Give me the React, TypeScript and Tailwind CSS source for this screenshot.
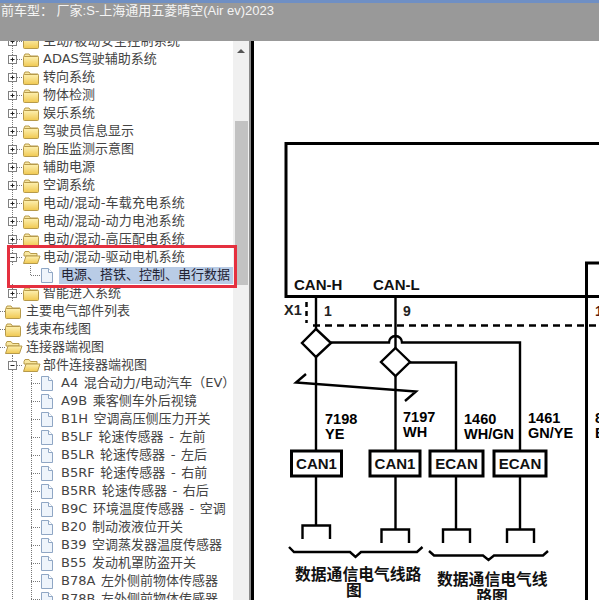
import React from "react";

type Row = { t: string; k: "c" | "o" | "f" | "fo" | "p"; inner?: boolean; sel?: boolean };

const rows: Row[] = [
  { t: "主动/被动安全控制系统", k: "c" },
  { t: "ADAS驾驶辅助系统", k: "c" },
  { t: "转向系统", k: "c" },
  { t: "物体检测", k: "c" },
  { t: "娱乐系统", k: "c" },
  { t: "驾驶员信息显示", k: "c" },
  { t: "胎压监测示意图", k: "c" },
  { t: "辅助电源", k: "c" },
  { t: "空调系统", k: "c" },
  { t: "电动/混动-车载充电系统", k: "c" },
  { t: "电动/混动-动力电池系统", k: "c" },
  { t: "电动/混动-高压配电系统", k: "c" },
  { t: "电动/混动-驱动电机系统", k: "o" },
  { t: "电源、搭铁、控制、串行数据", k: "p", sel: true },
  { t: "智能进入系统", k: "c" },
  { t: "主要电气部件列表", k: "f" },
  { t: "线束布线图", k: "f" },
  { t: "连接器端视图", k: "fo" },
  { t: "部件连接器端视图", k: "o" },
  { t: "A4 混合动力/电动汽车（EV）", k: "p", inner: true },
  { t: "A9B 乘客侧车外后视镜", k: "p", inner: true },
  { t: "B1H 空调高压侧压力开关", k: "p", inner: true },
  { t: "B5LF 轮速传感器 - 左前", k: "p", inner: true },
  { t: "B5LR 轮速传感器 - 左后", k: "p", inner: true },
  { t: "B5RF 轮速传感器 - 右前", k: "p", inner: true },
  { t: "B5RR 轮速传感器 - 右后", k: "p", inner: true },
  { t: "B9C 环境温度传感器 - 空调", k: "p", inner: true },
  { t: "B20 制动液液位开关", k: "p", inner: true },
  { t: "B39 空调蒸发器温度传感器", k: "p", inner: true },
  { t: "B55 发动机罩防盗开关", k: "p", inner: true },
  { t: "B78A 左外侧前物体传感器", k: "p", inner: true },
  { t: "B78B 左外侧前物体传感器", k: "p", inner: true },
];

const dot = { stroke: "#777", strokeWidth: 1, strokeDasharray: "1 1", fill: "none" };

function Folder({ x, open }: { x: number; open: boolean }) {
  const d = `translate(${x} 0)`;
  return open ? (
    <g transform={d}>
      <path d="M1 5.5 L2 3.5 H6 L7.5 5.5 H14 V8 H1 Z" fill="#f8e7a0" stroke="#b79a4a" />
      <path d="M.5 15.5 L3 8 H17 L14.5 15.5 Z" fill="url(#fold)" stroke="#b79a4a" />
    </g>
  ) : (
    <g transform={d}>
      <path d="M1 6 L2 4 H6 L7.5 6 H15 V8 H1 Z" fill="#f8e7a0" stroke="#b79a4a" />
      <rect x=".5" y="6.5" width="15" height="10" rx="1" fill="url(#fold)" stroke="#b79a4a" />
    </g>
  );
}

function Page({ x }: { x: number }) {
  return (
    <g transform={`translate(${x} 0)`}>
      <path d="M.5 2.5 H7.5 L11.5 6.5 V16.5 H.5 Z" fill="#eef4fb" stroke="#8fa6c4" />
      <path d="M7.5 2.5 V6.5 H11.5" fill="#ffffff" stroke="#8fa6c4" />
    </g>
  );
}

function Expander({ open }: { open: boolean }) {
  return (
    <g>
      <rect x="8.5" y="5.5" width="8" height="8" fill="#fff" stroke="#808080" />
      <path d="M10.5 9.5 H14.5" stroke="#222" />
      {!open && <path d="M12.5 7.5 V11.5" stroke="#222" />}
    </g>
  );
}

function Lead({ r }: { r: Row }) {
  const w = r.k === "p" ? 59 : r.k === "f" || r.k === "fo" ? 25 : 42;
  return (
    <svg width={w} height={18} className="shrink-0 block">
      {r.k === "p" && (
        <>
          <path d={r.inner ? "M31.5 0 V18" : "M30.5 0 V9"} {...dot} />
          <path d="M31 9.5 H41" {...dot} />
          <Page x={41} />
          {r.inner && <path d="M12.5 0 V18" {...dot} />}
        </>
      )}
      {(r.k === "c" || r.k === "o") && (
        <>
          <path d="M12.5 0 V18" {...dot} />
          <path d="M17 9.5 H23" {...dot} />
          <Expander open={r.k === "o"} />
          <Folder x={23} open={r.k === "o"} />
        </>
      )}
      {(r.k === "f" || r.k === "fo") && (
        <>
          <path d="M0 9.5 H5" {...dot} />
          {r.k === "fo" && <path d="M12.5 15 V18" {...dot} />}
          <Folder x={5} open={r.k === "fo"} />
        </>
      )}
    </svg>
  );
}

function Diagram() {
  const w = { stroke: "#000", strokeWidth: 2.4, fill: "none" };
  const box = (x: number, y: number, bw: number, label: string) => (
    <g key={x}>
      <rect x={x} y={y} width={bw} height={25} fill="#fff" stroke="#000" strokeWidth={3} />
      <text x={x + bw / 2} y={y + 18} textAnchor="middle" fontSize={15} fontWeight={700} fill="#111">
        {label}
      </text>
    </g>
  );
  const wire2 = (x: number, y: number, a: string, b: string) => (
    <g key={a + x}>
      <text x={x} y={y} fontSize={14.5} fontWeight={700} fill="#000">{a}</text>
      <text x={x} y={y + 15} fontSize={14.5} fontWeight={700} fill="#000">{b}</text>
    </g>
  );
  return (
    <svg
      width={345}
      height={559}
      viewBox="254 41 345 559"
      className="block font-['Liberation_Sans','Noto_Sans_CJK_SC',sans-serif]"
    >
      <path d="M599 143.5 H286 V296.5 H599" {...w} strokeWidth={3} />
      <path d="M599 263 H586.5 V600" {...w} strokeWidth={3} />
      <text x={294} y={290} fontSize={15} fontWeight={600} fill="#111">CAN-H</text>
      <text x={373} y={290} fontSize={15} fontWeight={600} fill="#111">CAN-L</text>
      <text x={284} y={315} fontSize={14.5} fontWeight={700} fill="#222">X1</text>
      <text x={324} y={316} fontSize={14} fontWeight={700} fill="#222">1</text>
      <text x={403} y={316} fontSize={14} fontWeight={700} fill="#222">9</text>
      <text x={595} y={316} fontSize={14} fontWeight={700} fill="#5a1a10">1</text>
      <path d="M306.5 302 V323" {...w} strokeDasharray="5 4" strokeWidth={2.5} />
      <path d="M313 325.5 H599" {...w} strokeDasharray="7 5" strokeWidth={2.5} />

      <path d="M316 296 V329 M316 357 V450 M316 476 V525" {...w} />
      <path d="M395.5 296 V348 M395.5 376 V450 M395.5 476 V529" {...w} />
      <path d="M316 329 L331 343 L316 357 L302 343 Z" {...w} />
      <path d="M395.5 348 L410 362 L395.5 376 L381 362 Z" {...w} />
      <path d="M331 342.5 H389 A6.5 6.5 0 0 1 402 342.5 H520 V450 M520 476 V529" {...w} />
      <path d="M410 362.5 H456 V450 M456 476 V529" {...w} />
      <path d="M306 374 L296 382.5 L416 391.5 L405 401" {...w} />

      {wire2(325, 424, "7198", "YE")}
      {wire2(403, 422, "7197", "WH")}
      {wire2(464, 424, "1460", "WH/GN")}
      {wire2(528, 423, "1461", "GN/YE")}
      {wire2(595, 423, "8", "B")}

      {box(291.5, 451, 50, "CAN1")}
      {box(370, 451, 50, "CAN1")}
      {box(430, 451, 53, "ECAN")}
      {box(494, 451, 52, "ECAN")}

      <path d="M302.5 539 V525.5 H330 V539" {...w} />
      <path d="M381.5 543 V529.5 H409 V543" {...w} />
      <path d="M443 543 V529.5 H470 V543" {...w} />
      <path d="M507 543 V529.5 H534 V543" {...w} />

      <path d="M289 547 L294 552 H350 L355.5 557 L361 552 H417 L422.5 547" {...w} />
      <path d="M429 551 L434 555.5 H483 L488.5 560 L494 555.5 H543 L548 551" {...w} />

      <g fontSize={15.8} fontWeight={700} fill="#111">
        <text x={295} y={580}>数据通信电气线路</text>
        <text x={354} y={596} textAnchor="middle">图</text>
        <text x={437} y={585}>数据通信电气线</text>
        <text x={492} y={602} textAnchor="middle">路图</text>
      </g>
    </svg>
  );
}

function textClass(r: Row) {
  if (r.sel) return "flex h-[17px] flex-1 items-center bg-[#b9cce6] pl-[2px] text-[13px] text-[#223]";
  if (r.k === "p") return "pl-[2px] text-[13px] text-[#444444] [word-spacing:1.5px]";
  if (r.t.includes("/")) return "pl-[1px] text-[13px] text-[#444444] tracking-[.25px]";
  return "pl-[1px] text-[13px] text-[#444444]";
}

export default function App() {
  return (
    <div className="relative flex h-[600px] w-[599px] flex-col overflow-hidden bg-white font-['DejaVu_Sans','Noto_Sans_CJK_SC',sans-serif]">
      <svg width="0" height="0" className="absolute">
        <defs>
          <linearGradient id="fold" x1="0" y1="0" x2="0" y2="1">
            <stop offset="0" stopColor="#fdf0b0" />
            <stop offset="1" stopColor="#f0c850" />
          </linearGradient>
        </defs>
      </svg>

      <header className="z-10 h-[41px] shrink-0 border-t-[3px] border-t-[#6f8fc4] bg-[#999999] pt-[1px] pl-[1px] font-['Liberation_Sans','Noto_Sans_CJK_SC',sans-serif] text-[13px] leading-[14px] whitespace-nowrap text-[#f4f4f4]">
        前车型： 厂家:S-上海通用五菱晴空(Air ev)2023
      </header>

      <main className="flex min-h-0 flex-1">
        <nav className="h-full w-[233px] shrink-0 overflow-hidden">
          <ul className="-mt-[9px]">
            {rows.map((r) => (
              <li key={r.t} className="flex h-[18px] items-center whitespace-nowrap">
                <Lead r={r} />
                <span className={textClass(r)}>{r.t}</span>
              </li>
            ))}
          </ul>
        </nav>

        <div className="flex h-full w-[16px] shrink-0 flex-col items-center bg-[#f0f0f0] pt-[8px]">
          <div className="h-0 w-0 border-x-[4px] border-b-[4px] border-x-transparent border-b-[#555]" />
          <div className="mt-[68px] h-[164px] w-[13px] bg-[#c2c2c2]" />
        </div>
        <div className="h-full w-[2px] shrink-0 bg-[#8a8a8a]" />
        <div className="h-full w-[3px] shrink-0 bg-black" />
        <div className="min-w-0 flex-1 bg-white">
          <Diagram />
        </div>
      </main>

      <div className="pointer-events-none absolute top-[245px] left-[7px] h-[43px] w-[230px] border-[3px] border-[#e5303f]" />
    </div>
  );
}
